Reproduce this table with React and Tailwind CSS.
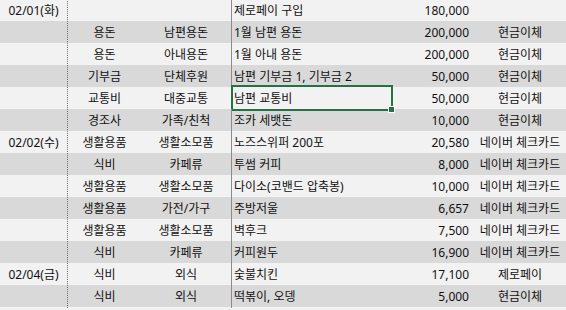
import React from "react";

const rows = [
  ["02/01(화)", "", "", "제로페이 구입", "180,000", ""],
  ["", "용돈", "남편용돈", "1월 남편 용돈", "200,000", "현금이체"],
  ["", "용돈", "아내용돈", "1월 아내 용돈", "200,000", "현금이체"],
  ["", "기부금", "단체후원", "남편 기부금 1, 기부금 2", "50,000", "현금이체"],
  ["", "교통비", "대중교통", "남편 교통비", "50,000", "현금이체"],
  ["", "경조사", "가족/친척", "조카 세뱃돈", "10,000", "현금이체"],
  ["02/02(수)", "생활용품", "생활소모품", "노즈스위퍼 200포", "20,580", "네이버 체크카드"],
  ["", "식비", "카페류", "투썸 커피", "8,000", "네이버 체크카드"],
  ["", "생활용품", "생활소모품", "다이소(코밴드 압축봉)", "10,000", "네이버 체크카드"],
  ["", "생활용품", "가전/가구", "주방저울", "6,657", "네이버 체크카드"],
  ["", "생활용품", "생활소모품", "벽후크", "7,500", "네이버 체크카드"],
  ["", "식비", "카페류", "커피원두", "16,900", "네이버 체크카드"],
  ["02/04(금)", "식비", "외식", "숯불치킨", "17,100", "제로페이"],
  ["", "식비", "외식", "떡볶이, 오뎅", "5,000", "현금이체"],
];

export default function App() {
  return (
    <div
      className="w-[566px] h-[310px] overflow-hidden bg-[#f2f2f2] text-[12px] text-[#111]"
      style={{ fontFamily: '"Noto Sans", "Noto Sans CJK KR", sans-serif' }}
    >
      <div className="-mt-px flex flex-col w-[568px]">
        {rows.map((r, i) => (
          <div
            key={i}
            className={`grid grid-cols-[68px_73px_90px_161px_80px_96px] h-[22px] leading-[22px] ${
              i % 2 === 0 ? "bg-[#f2f2f2]" : "bg-[#d9d9d9]"
            }`}
          >
            <div className="border-r border-dotted border-[#6e6e6e] text-center whitespace-nowrap pt-[1px]">
              {r[0]}
            </div>
            <div className="text-center whitespace-nowrap pt-[1px]">{r[1]}</div>
            <div className="text-center whitespace-nowrap pt-[1px]">{r[2]}</div>
            <div className="relative border-l border-[#8c8c8c] pl-[2px] whitespace-nowrap pt-[1px]">
              {r[3]}
              {i === 4 && (
                <div className="absolute -left-[1px] -top-[2px] -right-[1px] -bottom-[1px] border-2 border-[#217346]">
                  <div className="absolute -right-[4px] -bottom-[4px] w-[7px] h-[7px] bg-[#217346] border border-white" />
                </div>
              )}
            </div>
            <div className="text-right pr-[3px] whitespace-nowrap pt-[1px]">{r[4]}</div>
            <div className="text-center whitespace-nowrap pt-[1px]">{r[5]}</div>
          </div>
        ))}
      </div>
    </div>
  );
}
